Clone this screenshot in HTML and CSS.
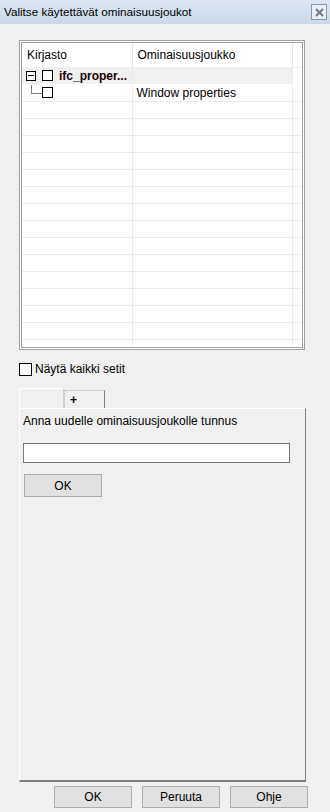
FILE: index.html
```html
<!DOCTYPE html>
<html lang="fi">
  <head>
    <meta charset="UTF-8" />
    <title>Valitse käytettävät ominaisuusjoukot</title>
    <link rel="stylesheet" href="styles.css">
  </head>
  <body>
    <div class="dialog">
      <!-- Title bar -->
      <div class="titlebar">
        <span class="title">Valitse käytettävät ominaisuusjoukot</span>
        <span class="close-btn">
          <svg width="9" height="9" viewBox="0 0 9 9">
            <path d="M1 1 L8 8 M8 1 L1 8" stroke="#6f7a86" stroke-width="2" />
          </svg>
        </span>
      </div>
      <div class="body">
        <!-- Tree list -->
        <div class="list">
          <div class="list-inner">
            <table class="grid">
              <thead>
                <tr>
                  <th class="col-lib">Kirjasto</th>
                  <th class="col-set">Ominaisuusjoukko</th>
                  <th class="col-pad"></th>
                </tr>
              </thead>
              <tbody>
                <tr class="row-group">
                  <td>
                    <span class="tree">
                      <span class="expander"></span>
                      <span class="check"></span>
                      <b class="lib-name">ifc_proper...</b>
                    </span>
                  </td>
                  <td></td>
                  <td class="blank"></td>
                </tr>
                <tr>
                  <td>
                    <span class="tree">
                      <span class="branch"></span>
                      <span class="check"></span>
                    </span>
                  </td>
                  <td>Window properties</td>
                  <td></td>
                </tr>
                <tr><td></td><td></td><td></td></tr>
                <tr><td></td><td></td><td></td></tr>
                <tr><td></td><td></td><td></td></tr>
                <tr><td></td><td></td><td></td></tr>
                <tr><td></td><td></td><td></td></tr>
                <tr><td></td><td></td><td></td></tr>
                <tr><td></td><td></td><td></td></tr>
                <tr><td></td><td></td><td></td></tr>
                <tr><td></td><td></td><td></td></tr>
                <tr><td></td><td></td><td></td></tr>
                <tr><td></td><td></td><td></td></tr>
                <tr><td></td><td></td><td></td></tr>
                <tr><td></td><td></td><td></td></tr>
                <tr><td></td><td></td><td></td></tr>
                <tr><td></td><td></td><td></td></tr>
              </tbody>
            </table>
          </div>
        </div>

        <label class="show-all">
          <span class="check big"></span>
          Näytä kaikki setit
        </label>

        <!-- Tabs -->
        <div class="tabs">
          <div class="tab active"></div>
          <div class="tab">+</div>
        </div>
        <div class="tab-panel">
          <div class="panel-label">Anna uudelle ominaisuusjoukolle tunnus</div>
          <div class="text-input"></div>
          <button class="btn btn-panel">OK</button>
        </div>
      </div>

      <!-- Footer buttons -->
      <div class="footer">
        <button class="btn">OK</button>
        <button class="btn">Peruuta</button>
        <button class="btn">Ohje</button>
      </div>
    </div>
  </body>
</html>
```

FILE: styles.css
```css
* {
  margin: 0;
  padding: 0;
  box-sizing: border-box;
}
body {
  font-family: "Liberation Sans", Arial, sans-serif;
  font-size: 12px;
  color: #000;
  background-color: #f0f0f0;
}
.dialog {
  width: 330px;
  height: 812px;
  display: flex;
  flex-direction: column;
}
/* Title bar */
.titlebar {
  height: 24px;
  background: linear-gradient(#dbe6f2, #cbd9e8);
  display: flex;
  align-items: center;
  justify-content: space-between;
  padding: 0 3px 0 4px;
}
.title {
  font-size: 11.7px;
  margin-top: -1px;
}
.close-btn {
  width: 16px;
  height: 16px;
  border: 1px solid #8b97a3;
  background: #e9eef4;
  display: flex;
  align-items: center;
  justify-content: center;
}
.body {
  padding: 16px 25px 0 19px;
}
/* Tree list */
.list {
  width: 286px;
  height: 310px;
  border: 1px solid #a0a0a0;
  padding: 1px;
  background: #fff;
}
.list-inner {
  height: 100%;
  border: 1px solid #a0a0a0;
  overflow: hidden;
  background: #fff;
}
.grid {
  width: 280px;
  border-collapse: collapse;
  table-layout: fixed;
}
.grid th {
  height: 24px;
  font-weight: normal;
  text-align: left;
  padding: 0 0 0 5px;
  border-right: 1px solid #e5e5e5;
  border-bottom: 1px solid #f0f0f0;
}
.grid th.col-pad {
  border-right: none;
}
.col-lib {
  width: 110px;
}
.col-set {
  width: 160px;
}
.grid td {
  height: 17px;
  padding: 0 0 0 4px;
  border-right: 1px solid #ececec;
  border-bottom: 1px solid #ececec;
  white-space: nowrap;
  overflow: hidden;
}
.grid td:last-child {
  border-right: none;
}
.row-group td {
  background: #f0f0f0;
  border-bottom-color: #fff;
}
.row-group td.blank {
  background: #fff;
}
.tree {
  display: flex;
  align-items: center;
  gap: 6px;
}
.expander {
  position: relative;
  width: 10px;
  height: 10px;
  border: 1px solid #000;
  background: #fff;
}
.expander::after {
  content: "";
  position: absolute;
  left: 1px;
  top: 3px;
  width: 6px;
  height: 1px;
  background: #000;
}
.branch {
  width: 11px;
  height: 14px;
  border-left: 1px solid #808080;
  border-bottom: 1px solid #808080;
  margin: -12px 0 0 5px;
}
.tree .branch + .check {
  margin-left: -6px;
}
.check {
  width: 11px;
  height: 11px;
  border: 1px solid #000;
  background: #fff;
  display: inline-block;
}
.lib-name {
  font-weight: bold;
  color: #1a0005;
}
/* Show all */
.show-all {
  display: flex;
  align-items: center;
  gap: 3px;
  margin-top: 12px;
  height: 14px;
}
.check.big {
  width: 13px;
  height: 13px;
}
/* Tabs */
.tabs {
  display: flex;
  align-items: flex-end;
  margin-top: 12px;
  height: 20px;
}
.tab {
  width: 41px;
  height: 18px;
  border: 1px solid #d0d0d0;
  border-right: 1px solid #808080;
  border-bottom: none;
  background: #f0f0f0;
  padding: 2px 0 0 5px;
  font-weight: bold;
}
.tab.active {
  width: 45px;
  height: 20px;
  border-color: #fff;
  border-right-color: #d0d0d0;
}
.tab-panel {
  height: 374px;
  width: 287px;
  border-top: 1px solid #fff;
  border-left: 1px solid #fff;
  border-right: 1px solid #808080;
  border-bottom: 2px solid #808080;
  padding: 4px 0 0 3px;
}
.panel-label {
  height: 16px;
  line-height: 16px;
}
.text-input {
  width: 267px;
  height: 20px;
  border: 1px solid #7a7a7a;
  background: #fff;
  margin-top: 14px;
}
.btn {
  font-family: inherit;
  font-size: 12px;
  color: #000;
  width: 78px;
  height: 22px;
  background: #e1e1e1;
  border: 1px solid #adadad;
}
.btn-panel {
  margin: 11px 0 0 1px;
  height: 23px;
}
/* Footer */
.footer {
  display: flex;
  gap: 10px;
  padding: 4px 0 0 54px;
}
```
